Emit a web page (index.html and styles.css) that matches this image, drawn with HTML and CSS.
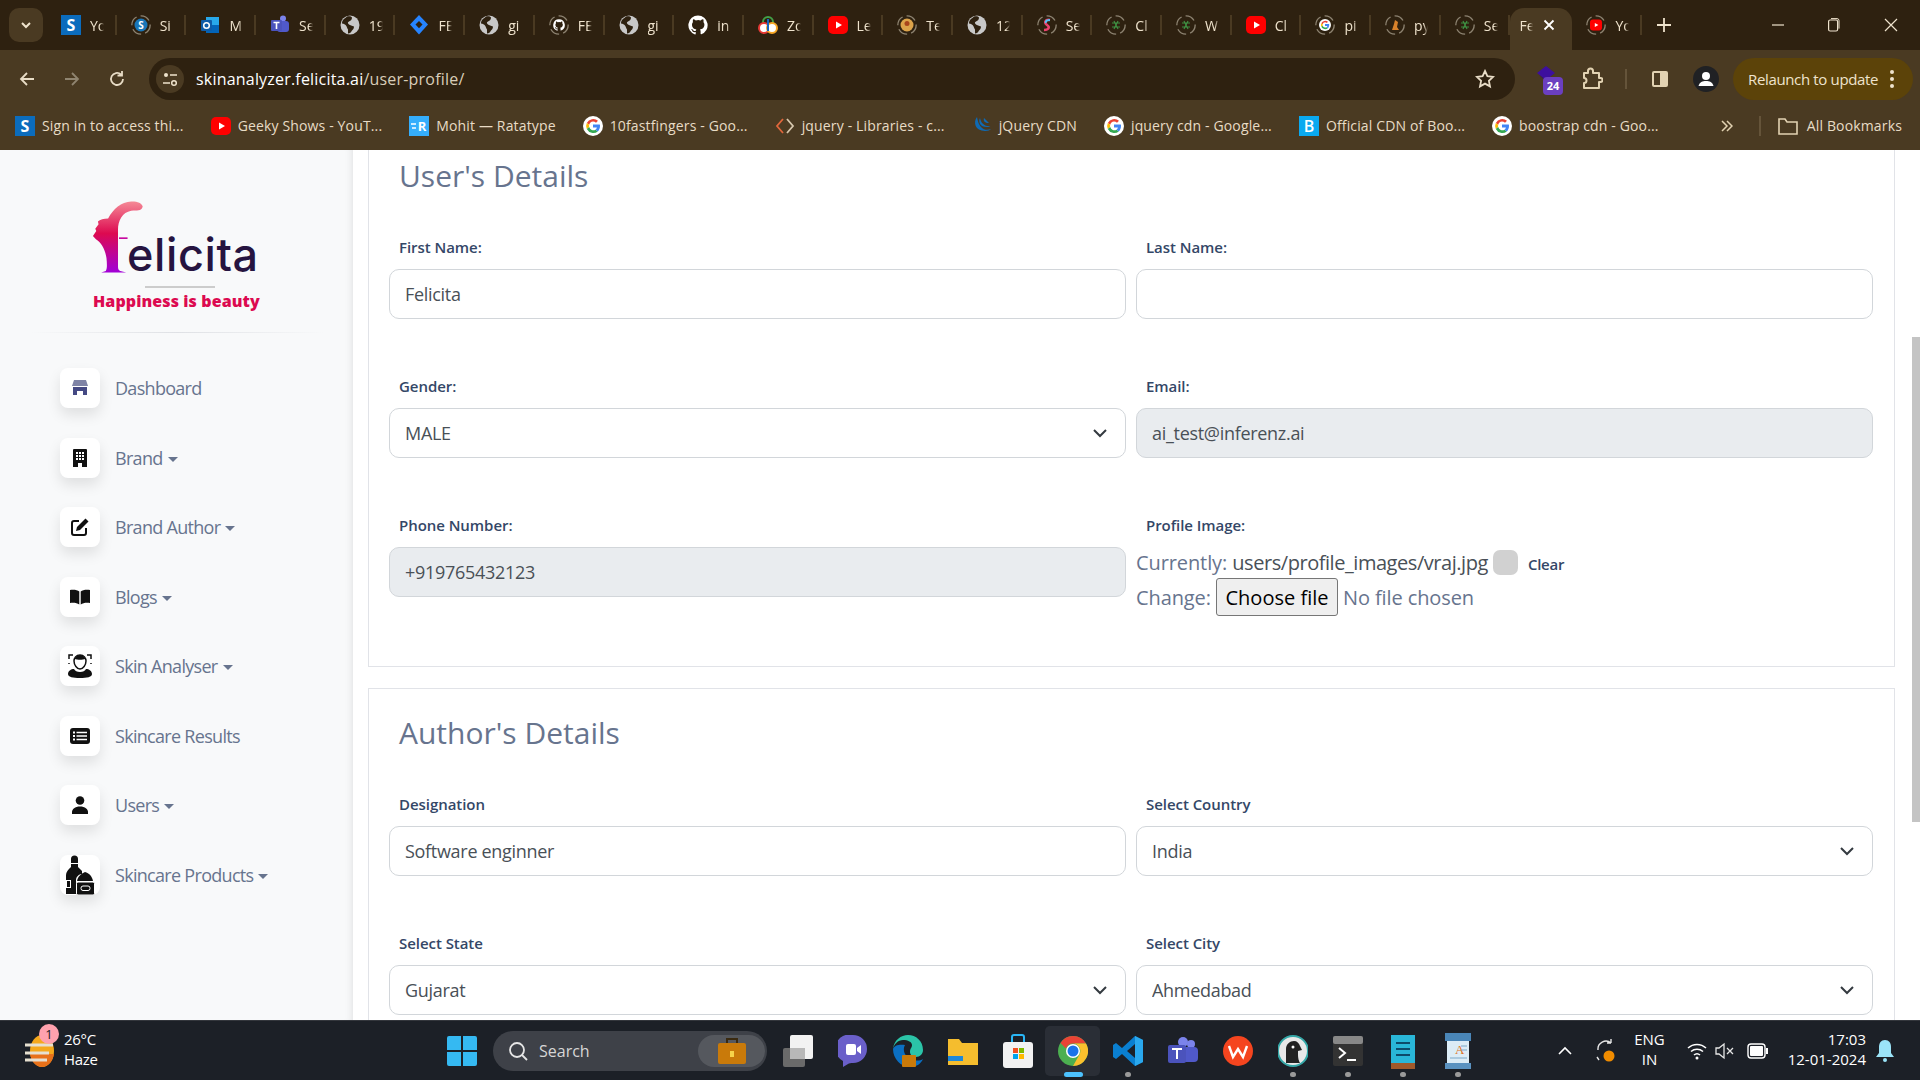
FILE: index.html
```html
<!DOCTYPE html>
<html lang="en">
<head>
    <meta charset="UTF-8">
    <title>User Profile</title>
    <link rel="stylesheet" href="styles.css">
</head>
<body>
    <svg class="defs" width="0" height="0">
        <symbol id="globe" viewBox="0 0 20 20"><circle cx="10" cy="10" r="9.5" fill="#c8c8c8"/><path d="M7 1.5c-2 2-5 3-5 7 2 0 3 1 4 2s1 3 2 4v4c2 0 3-1 4-3 1-1 2-2 2-4-2-1-4-1-5-2s-2-2 0-3 3-2 3-4C11 1 9 1 7 1.5z" fill="#2e2110"/></symbol>
        <symbol id="yt" viewBox="0 0 20 20"><rect y="1" width="20" height="18" rx="5" fill="#f00"/><path d="M8 6.5l6 3.5-6 3.5z" fill="#fff"/></symbol>
        <symbol id="goog" viewBox="0 0 20 20"><circle cx="10" cy="10" r="10" fill="#fff"/><path d="M10 5.5a4.5 4.5 0 0 1 3 1.2l2-2A7.300 7.300 0 0 0 3.800 7l2.400 1.800A4.300 4.300 0 0 1 10 5.500z" fill="#ea4335"/><path d="M3.800 7a7.300 7.300 0 0 0 0 6l2.400-1.900a4.300 4.300 0 0 1 0-2.300z" fill="#fbbc05"/><path d="M3.800 13a7.300 7.300 0 0 0 11 2.500l-2.300-1.800a4.400 4.400 0 0 1-6.300-2.600z" fill="#34a853"/><path d="M17 10c0-.6 0-1-.2-1.500H10v3h3.900c-.2 1-.7 1.700-1.400 2.200l2.300 1.800c1.300-1.300 2.200-3.200 2.200-5.500z" fill="#4285f4"/></symbol>
        <symbol id="gh" viewBox="0 0 20 20"><path d="M10 .5a9.700 9.700 0 0 0-3 18.900c.5.100.7-.2.700-.5v-1.800c-2.700.6-3.300-1.200-3.300-1.200-.4-1.100-1-1.400-1-1.400-.9-.6.100-.6.100-.6 1 .1 1.500 1 1.500 1 .9 1.500 2.300 1.100 2.800.8.100-.6.300-1.100.6-1.300-2.100-.2-4.400-1.100-4.400-4.800 0-1 .4-1.900 1-2.600-.1-.2-.4-1.200.1-2.600 0 0 .8-.3 2.700 1a9 9 0 0 1 4.800 0c1.800-1.300 2.700-1 2.700-1 .5 1.400.2 2.400.1 2.600.6.700 1 1.600 1 2.600 0 3.700-2.300 4.600-4.400 4.800.3.300.6.900.6 1.800v2.600c0 .3.200.6.700.5A9.700 9.700 0 0 0 10 .5z" fill="#fff"/></symbol>
        <symbol id="ring" viewBox="0 0 24 24"><circle cx="12" cy="12" r="11" fill="none" stroke="#8d8371" stroke-width="1.600" stroke-dasharray="12 5"/></symbol>
    </svg>

    <div class="tabstrip">
        <button class="tab-search"><svg width="12" height="12" viewBox="0 0 12 12"><path d="M2 4l4 4 4-4" fill="none" stroke="#efe3cd" stroke-width="2"/></svg></button>
        <div class="tab"><svg class="fav" viewBox="0 0 20 20"><rect width="20" height="20" fill="#0b6cbd"/><text x="10" y="16" font-size="16" font-weight="700" font-family="Open Sans" text-anchor="middle" fill="#fff">S</text></svg><span>Yo</span></div>
        <div class="tab"><svg class="fav"><use href="#ring"/><circle cx="10" cy="10" r="6.500" fill="#1976b8"/><text x="10" y="13.500" font-size="10" font-weight="700" font-family="Open Sans" text-anchor="middle" fill="#fff">S</text></svg><span>Si</span></div>
        <div class="tab"><svg class="fav" viewBox="0 0 20 20"><rect x="6" y="2" width="13" height="16" fill="#28a8ea"/><rect x="6" y="10" width="13" height="8" fill="#0364b8"/><rect x="1" y="5" width="11" height="11" rx="1" fill="#0f5ca8"/><circle cx="6.500" cy="10.500" r="2.800" fill="none" stroke="#fff" stroke-width="1.500"/></svg><span>M</span></div>
        <div class="tab"><svg class="fav" viewBox="0 0 20 20"><circle cx="13" cy="3.500" r="3" fill="#7b83eb"/><rect x="7" y="6" width="12" height="11" rx="3" fill="#5059c9"/><rect x="1" y="5" width="11" height="11" rx="1" fill="#4b53bc"/><path d="M3.500 7.500h6M6.500 7.500v6.500" stroke="#fff" stroke-width="1.600"/></svg><span>Se</span></div>
        <div class="tab"><svg class="fav"><use href="#globe"/></svg><span>19</span></div>
        <div class="tab"><svg class="fav" viewBox="0 0 20 20"><path d="M10 0l9 9.500-9 10-9-10z" fill="#2684ff"/><path d="M10 6l3.500 3.500-3.500 3.800-3.500-3.800z" fill="#2e2110"/></svg><span>FE</span></div>
        <div class="tab"><svg class="fav"><use href="#globe"/></svg><span>gi</span></div>
        <div class="tab"><svg class="fav"><use href="#ring"/><use href="#gh" x="4" y="4" width="12" height="12"/></svg><span>FE</span></div>
        <div class="tab"><svg class="fav"><use href="#globe"/></svg><span>gi</span></div>
        <div class="tab"><svg class="fav"><use href="#gh"/></svg><span>in</span></div>
        <div class="tab"><svg class="fav" viewBox="0 0 20 20"><circle cx="10" cy="7" r="5" fill="none" stroke="#43a047" stroke-width="2"/><circle cx="6" cy="13" r="5" fill="#fff" stroke="#e53935" stroke-width="2"/><circle cx="14" cy="13" r="5" fill="#fff" stroke="#f9a825" stroke-width="2"/><path d="M10 4v12" stroke="#1565c0" stroke-width="2"/></svg><span>Zo</span></div>
        <div class="tab"><svg class="fav"><use href="#yt"/></svg><span>Le</span></div>
        <div class="tab"><svg class="fav"><use href="#ring"/><circle cx="10" cy="10" r="6.500" fill="#dca34a"/><circle cx="10" cy="8.500" r="2.500" fill="#a8461c"/></svg><span>Te</span></div>
        <div class="tab"><svg class="fav"><use href="#globe"/></svg><span>12</span></div>
        <div class="tab"><svg class="fav"><use href="#ring"/><path d="M13 5c-5-1-6 3-3 5s2 5-3 5" fill="none" stroke="#e8416f" stroke-width="2.600"/><path d="M13 5c-3 0-5 1-4 3" fill="none" stroke="#4fc3f7" stroke-width="2"/></svg><span>Se</span></div>
        <div class="tab"><svg class="fav"><use href="#ring"/><path d="M6 8h8M6 12h8M8 6l4 8M12 6l-4 8" stroke="#3e8e41" stroke-width="1.200"/></svg><span>Cl</span></div>
        <div class="tab"><svg class="fav"><use href="#ring"/><path d="M6 8h8M6 12h8M8 6l4 8M12 6l-4 8" stroke="#3e8e41" stroke-width="1.200"/></svg><span>W</span></div>
        <div class="tab"><svg class="fav"><use href="#yt"/></svg><span>Cl</span></div>
        <div class="tab"><svg class="fav"><use href="#ring"/><use href="#goog" x="4" y="4" width="12" height="12"/></svg><span>pi</span></div>
        <div class="tab"><svg class="fav"><use href="#ring"/><path d="M7 15h7l-2-3 1-5-3-2-1 4z" fill="#d9822b"/></svg><span>py</span></div>
        <div class="tab"><svg class="fav"><use href="#ring"/><path d="M6 8h8M6 12h8M8 6l4 8M12 6l-4 8" stroke="#3e8e41" stroke-width="1.200"/></svg><span>Se</span></div>
        <div class="tab tab-active"><span>Fe</span><svg width="12" height="12" viewBox="0 0 12 12"><path d="M1.500 1.500l9 9M10.500 1.500l-9 9" stroke="#fff" stroke-width="1.800"/></svg></div>
        <div class="tab tab-last"><svg class="fav"><use href="#ring"/><use href="#yt" x="4" y="4" width="12" height="12"/></svg><span>Yo</span></div>
        <svg class="new-tab" width="14" height="14" viewBox="0 0 14 14"><path d="M7 0v14M0 7h14" stroke="#efe3cd" stroke-width="1.800"/></svg>
        <div class="win-btns">
            <svg width="12" height="12" viewBox="0 0 12 12"><path d="M0 6h12" stroke="#efe3cd" stroke-width="1.200"/></svg>
            <svg width="12" height="14" viewBox="0 0 12 14"><rect x=".6" y="2" width="9" height="11" rx="1.500" fill="none" stroke="#efe3cd" stroke-width="1.200"/><path d="M3 .6h6a2 2 0 0 1 2 2v8" fill="none" stroke="#efe3cd"/></svg>
            <svg width="14" height="14" viewBox="0 0 14 14"><path d="M1 1l12 12M13 1L1 13" stroke="#efe3cd" stroke-width="1.200"/></svg>
        </div>
    </div>

    <div class="toolbar">
        <svg class="nav-btn" width="18" height="18" viewBox="0 0 18 18"><path d="M16 9H3M9 3L3 9l6 6" fill="none" stroke="#e8dcc6" stroke-width="1.800"/></svg>
        <svg class="nav-btn" width="18" height="18" viewBox="0 0 18 18"><path d="M2 9h13M9 3l6 6-6 6" fill="none" stroke="#8f8470" stroke-width="1.800"/></svg>
        <svg class="nav-btn" width="18" height="18" viewBox="0 0 18 18"><path d="M15 9a6 6 0 1 1-2-4.500M14 1v4.500H9.500" fill="none" stroke="#e8dcc6" stroke-width="1.800"/></svg>
        <div class="omnibox">
            <span class="tune"><svg width="16" height="16" viewBox="0 0 16 16"><circle cx="4" cy="4" r="2" fill="#efe3cd"/><path d="M8 4h7M1 12h7" stroke="#efe3cd" stroke-width="1.500"/><circle cx="12" cy="12" r="2.300" fill="none" stroke="#efe3cd" stroke-width="1.500"/></svg></span>
            <span class="url">skinanalyzer.felicita.ai<span class="url-path">/user-profile/</span></span>
            <svg class="star" width="20" height="20" viewBox="0 0 20 20"><path d="M10 2l2.400 5.200 5.600.7-4.100 3.900 1.100 5.600-5-2.800-5 2.800 1.100-5.600L2 7.900l5.600-.7z" fill="none" stroke="#e8dcc6" stroke-width="1.800"/></svg>
        </div>
        <div class="ext-stack">
            <svg width="26" height="26" viewBox="0 0 26 26"><path d="M10 0l9 7-9 7-9-7z" fill="#3d0f9e"/><path d="M3 9l7 5 3-2v6z" fill="#2c0a78"/></svg>
            <span class="ext-badge">24</span>
        </div>
        <svg class="puzzle" width="22" height="24" viewBox="0 0 22 24"><path d="M3 6h4V4a2.500 2.500 0 0 1 5 0v2h6v5h1.500a2 2 0 0 1 0 4H18v6H3v-5a2.500 2.500 0 0 0 0-5z" fill="none" stroke="#e2d2b2" stroke-width="2" stroke-linejoin="round"/></svg>
        <span class="tool-sep"></span>
        <svg class="panel" width="18" height="18" viewBox="0 0 18 18"><rect x="1" y="1" width="16" height="16" rx="2" fill="#e2d2b2"/><rect x="3" y="3" width="6" height="12" fill="#4a3a22"/></svg>
        <span class="avatar"><svg width="26" height="26" viewBox="0 0 26 26"><circle cx="13" cy="13" r="13" fill="#202124"/><circle cx="13" cy="10" r="4" fill="#fff"/><path d="M5.500 20c1-4 4-5 7.500-5s6.500 1 7.500 5z" fill="#fff"/></svg></span>
        <div class="relaunch">Relaunch to update<span class="kebab"><i></i><i></i><i></i></span></div>
    </div>

    <div class="bookmarks">
        <div class="bm"><svg class="fav" viewBox="0 0 20 20"><rect width="20" height="20" fill="#0b6cbd"/><text x="10" y="16" font-size="16" font-weight="700" font-family="Open Sans" text-anchor="middle" fill="#fff">S</text></svg><span>Sign in to access thi...</span></div>
        <div class="bm"><svg class="fav"><use href="#yt"/></svg><span>Geeky Shows - YouT...</span></div>
        <div class="bm"><svg class="fav" viewBox="0 0 20 20"><rect width="20" height="20" fill="#35aefc"/><text x="13" y="15" font-size="13" font-weight="700" font-family="Open Sans" text-anchor="middle" fill="#fff">R</text><path d="M2 8h5M3 12h4" stroke="#fff" stroke-width="1.500"/></svg><span>Mohit — Ratatype</span></div>
        <div class="bm"><svg class="fav"><use href="#goog"/></svg><span>10fastfingers - Goo...</span></div>
        <div class="bm"><svg class="fav" viewBox="0 0 20 20"><path d="M8 3L2 10l6 7" fill="none" stroke="#e0673c" stroke-width="1.800"/><path d="M12 3l6 7-6 7" fill="none" stroke="#d6c7ae" stroke-width="1.800"/></svg><span>jquery - Libraries - c...</span></div>
        <div class="bm"><svg class="fav" viewBox="0 0 20 20"><path d="M5 1C1 6 3 15 13 15c3 0 5-1 6-2-5 2-12 1-14-12zM8 2c-2 4 0 9 7 9 2 0 3-.5 4-1-5 1-10-2-11-8zM12 2c-1 3 1 5 5 5" fill="#0f6ab4"/></svg><span>jQuery CDN</span></div>
        <div class="bm"><svg class="fav"><use href="#goog"/></svg><span>jquery cdn - Google...</span></div>
        <div class="bm"><svg class="fav" viewBox="0 0 20 20"><rect width="20" height="20" fill="#0aa9f0"/><text x="10" y="16" font-size="16" font-weight="600" font-family="Open Sans" text-anchor="middle" fill="#fff">B</text></svg><span>Official CDN of Boo...</span></div>
        <div class="bm"><svg class="fav"><use href="#goog"/></svg><span>boostrap cdn - Goo...</span></div>
        <div class="bm-right">
            <svg width="12" height="12" viewBox="0 0 12 12"><path d="M1 1l5 5-5 5M6 1l5 5-5 5" fill="none" stroke="#e2d2b2" stroke-width="1.500"/></svg>
            <span class="tool-sep"></span>
            <svg width="20" height="18" viewBox="0 0 20 18"><path d="M1 2h6l2 3h10v12H1z" fill="none" stroke="#e2d2b2" stroke-width="1.600"/></svg>
            <span>All Bookmarks</span>
        </div>
    </div>

    <div class="page">
        <aside class="sidebar">
            <div class="brand">
                <div class="logo">
                    <svg class="logo-mark" width="56" height="76" viewBox="270 150 170 228">
                        <defs><linearGradient id="logoGrad" x1="0" y1="0" x2="0" y2="1"><stop offset="0" stop-color="#f58a96"/><stop offset=".45" stop-color="#dd0a50"/><stop offset="1" stop-color="#a000d8"/></linearGradient></defs>
                        <path d="M430 168C428 158 412 152 395 153 365 155 340 175 325 205 312 205 300 208 294 214L296 222 286 236 289 243 279 258 288 268C304 278 316 298 320 325 322 345 322 358 318 364L304 369H380L362 364C356 362 355 358 355 350V240C355 210 368 186 395 181 412 178 426 184 430 168Z" fill="url(#logoGrad)"/>
                        <path d="M358 262h26v5h-26z" fill="#c70aa0"/>
                    </svg>
                    <span class="logo-text">elicita</span>
                </div>
                <span class="logo-rule"></span>
                <span class="tagline">Happiness is beauty</span>
            </div>
            <hr class="side-divider">
            <nav class="side-nav">
                <a class="side-link"><span class="side-icon"><svg width="16" height="16" viewBox="0 0 16 16"><path d="M2 0h12l2 6H0z" fill="#7f84a6"/><path d="M1 7h14v8h-4v-4H5v4H1z" fill="#454a84"/></svg></span>Dashboard</a>
                <a class="side-link"><span class="side-icon"><svg width="14" height="18" viewBox="0 0 14 18"><path d="M1 0h12a1 1 0 0 1 1 1v17H9v-4H5v4H0V1a1 1 0 0 1 1-1z" fill="#111"/><path d="M3 3h2v2H3zM6 3h2v2H6zM9 3h2v2H9zM3 6h2v2H3zM6 6h2v2H6zM9 6h2v2H9zM3 9h2v2H3zM6 9h2v2H6zM9 9h2v2H9z" fill="#fff"/></svg></span><span class="drop">Brand</span></a>
                <a class="side-link"><span class="side-icon"><svg width="18" height="18" viewBox="0 0 18 18"><path d="M8 3H3a2 2 0 0 0-2 2v10a2 2 0 0 0 2 2h10a2 2 0 0 0 2-2v-5" fill="none" stroke="#111" stroke-width="2"/><path d="M14.500.5l3 3L9 12l-4 1 1-4z" fill="#111"/></svg></span><span class="drop">Brand Author</span></a>
                <a class="side-link"><span class="side-icon"><svg width="20" height="16" viewBox="0 0 20 16"><path d="M9.300 2.500C7.500 1 4 .5 0 1v13c4-.5 7 0 9.300 1.500zM10.700 2.500C12.500 1 16 .5 20 1v13c-4-.5-7 0-9.300 1.500z" fill="#111"/></svg></span><span class="drop">Blogs</span></a>
                <a class="side-link"><span class="side-icon"><svg width="24" height="24" viewBox="0 0 24 24"><path d="M1 5V1h4M19 1h4v4M1 9v1M23 9v1" fill="none" stroke="#111" stroke-width="1.500"/><path d="M12 1c-4 0-6 3-6 6 0 4 3 8 6 8s6-4 6-8c0-3-2-6-6-6z" fill="none" stroke="#111" stroke-width="1.500"/><path d="M6.500 5c3 1 8 1 11 0-1-3-3-4-5.500-4S7.500 2 6.500 5z" fill="#111"/><path d="M0 20c0-3 3-5 6-5 1 2 3 3 6 3s5-1 6-3c3 0 6 2 6 5 0 3-5 4-12 4S0 23 0 20z" fill="#111"/></svg></span><span class="drop">Skin Analyser</span></a>
                <a class="side-link"><span class="side-icon"><svg width="20" height="16" viewBox="0 0 20 16"><rect width="20" height="16" rx="3" fill="#111"/><path d="M3 3.500h2v2H3zM3 7h2v2H3zM3 10.500h2v2H3zM6.500 3.800H17v1.400H6.500zM6.500 7.300H17v1.400H6.500zM6.500 10.800H17v1.400H6.500z" fill="#fff"/></svg></span>Skincare Results</a>
                <a class="side-link"><span class="side-icon"><svg width="16" height="18" viewBox="0 0 16 18"><circle cx="8" cy="4.500" r="4.300" fill="#111"/><path d="M0 18v-2c0-3 3-5.500 8-5.500s8 2.500 8 5.500v2z" fill="#111"/></svg></span><span class="drop">Users</span></a>
                <a class="side-link"><span class="side-icon side-icon-tall"><svg width="29" height="40" viewBox="0 0 29 40"><path d="M5 4a3.500 3.500 0 0 1 7 0v4H5z" fill="#111"/><path d="M5 9h7v3l4 4v3c-3 0-6 3-6 6v14H0V20c0-3 2-5 5-8z" fill="#111"/><path d="M0 25h5v8H0z" fill="#fff"/><path d="M1 26h3v6H1z" fill="#111"/><path d="M11 26c1-5 4-7 8-9 4 1 7 4 8 9z" fill="#111"/><rect x="10.500" y="27" width="18" height="13" rx="1.500" fill="#111" stroke="#fff"/><rect x="15" y="31" width="9" height="4.500" rx="2" fill="none" stroke="#fff"/></svg></span><span class="drop">Skincare Products</span></a>
            </nav>
        </aside>

        <main class="content">
            <section class="card card-first">
                <h2>User's Details</h2>
                <div class="form-grid">
                    <div class="field"><label>First Name:</label><input class="input-field" type="text" value="Felicita"></div>
                    <div class="field"><label>Last Name:</label><input class="input-field" type="text"></div>
                    <div class="field"><label>Gender:</label><select class="input-field select-field"><option>MALE</option></select></div>
                    <div class="field"><label>Email:</label><input class="input-field" type="text" value="ai_test@inferenz.ai" disabled></div>
                    <div class="field"><label>Phone Number:</label><input class="input-field" type="text" value="+919765432123" disabled></div>
                    <div class="field">
                        <label>Profile Image:</label>
                        <div class="file-line">Currently: <a class="file-link">users/profile_images/vraj.jpg</a><span class="fake-check"></span><label class="clear-label">Clear</label></div>
                        <div class="file-line file-change">Change: <button class="choose-btn">Choose file</button><span class="no-file">No file chosen</span></div>
                    </div>
                </div>
            </section>
            <section class="card">
                <h2>Author's Details</h2>
                <div class="form-grid">
                    <div class="field"><label>Designation</label><input class="input-field" type="text" value="Software enginner"></div>
                    <div class="field"><label>Select Country</label><select class="input-field select-field"><option>India</option></select></div>
                    <div class="field"><label>Select State</label><select class="input-field select-field"><option>Gujarat</option></select></div>
                    <div class="field"><label>Select City</label><select class="input-field select-field"><option>Ahmedabad</option></select></div>
                </div>
            </section>
        </main>
        <div class="scrollbar"><div class="scroll-thumb"></div></div>
    </div>

    <footer class="taskbar">
        <div class="weather">
            <svg class="weather-icon" width="30" height="36" viewBox="0 0 30 36"><ellipse cx="17" cy="18" rx="12" ry="16" fill="#f5a81c"/><path d="M17 34c6 0 11-6 12-13H5c1 7 6 13 12 13z" fill="#e8711a"/><path d="M0 12h28M0 20h24M0 27h22" stroke="#e6e0d0" stroke-width="3"/></svg>
            <span class="weather-badge">1</span>
            <div class="weather-text"><span>26°C</span><span>Haze</span></div>
        </div>
        <div class="task-center">
            <svg class="start" width="30" height="30" viewBox="0 0 30 30"><path d="M0 2a2 2 0 0 1 2-2h12v14H0zM16 0h12a2 2 0 0 1 2 2v12H16zM0 16h14v14H2a2 2 0 0 1-2-2zM16 16h14v12a2 2 0 0 1-2 2H16z" fill="#35b9f2"/></svg>
            <div class="search">
                <svg width="20" height="20" viewBox="0 0 20 20"><circle cx="9" cy="9" r="7" fill="none" stroke="#e6e6e6" stroke-width="1.800"/><path d="M14 14l5 5" stroke="#e6e6e6" stroke-width="1.800"/></svg>
                <span>Search</span>
                <span class="search-pic"><svg width="28" height="26" viewBox="0 0 28 26"><rect y="5" width="28" height="21" rx="2" fill="#c97a0a"/><path d="M9 5V1h10v4" fill="none" stroke="#3a2a10" stroke-width="2"/><rect x="12" y="13" width="4" height="6" fill="#f6d34a"/></svg></span>
            </div>
            <div class="task-icons">
                <span class="task-item"><svg width="30" height="32" viewBox="0 0 30 32"><rect y="13" width="22" height="19" rx="2" fill="#6a6a6a"/><rect x="7" width="23" height="24" rx="2" fill="#f2f2f2"/><rect x="7" y="13" width="15" height="11" fill="#b8b8b8"/></svg></span>
                <span class="task-item"><svg width="30" height="32" viewBox="0 0 30 32"><path d="M15 0a14 14 0 0 1 0 28c-2 0-4 0-5 1l-5 3v-6A14 14 0 0 1 15 0z" fill="#6a5fc9"/><rect x="8" y="9" width="10" height="11" rx="2" fill="#fff"/><path d="M19 13l4-3v9l-4-3z" fill="#fff"/></svg></span>
                <span class="task-item"><svg width="30" height="32" viewBox="0 0 30 32"><path d="M0 14C1 5 8 0 15 0c8 0 15 6 15 15 0 4-3 7-7 7-3 0-6-2-6-5 0-4 2-4 2-7 0-3-4-5-9-5C5 5 1 9 0 14z" fill="#2bc4a8"/><path d="M0 14c0 10 8 18 17 18 6 0 11-3 13-8-3 2-8 2-12 0C12 22 9 15 12 10 7 9 1 10 0 14z" fill="#0b6fc2"/><rect x="9" y="20" width="14" height="12" rx="1" fill="#c97a0a"/></svg></span>
                <span class="task-item"><svg width="30" height="28" viewBox="0 0 30 28"><path d="M0 2h11l3 4h16v22H0z" fill="#f5bd2e"/><rect y="19" width="15" height="5" fill="#1e88d8"/></svg></span>
                <span class="task-item"><svg width="30" height="34" viewBox="0 0 30 34"><path d="M9 8V3a2 2 0 0 1 2-2h8a2 2 0 0 1 2 2v5" fill="none" stroke="#29b6f6" stroke-width="2"/><rect y="8" width="30" height="26" rx="3" fill="#f2f2f2"/><path d="M10 14h5v5h-5z" fill="#f25022"/><path d="M16 14h5v5h-5z" fill="#7fba00"/><path d="M10 20h5v5h-5z" fill="#00a4ef"/><path d="M16 20h5v5h-5z" fill="#ffb900"/></svg></span>
                <span class="task-item task-active"><svg width="30" height="30" viewBox="0 0 30 30"><circle cx="15" cy="15" r="15" fill="#4caf50"/><path d="M15 0a15 15 0 0 1 13 7.500H15a7.500 7.500 0 0 0-7 5L2.500 7A15 15 0 0 1 15 0z" fill="#ea4335"/><path d="M28 7.500A15 15 0 0 1 15 30l6.500-11.500A7.500 7.500 0 0 0 15 7.500z" fill="#fbc02d"/><circle cx="15" cy="15" r="7" fill="#fff"/><circle cx="15" cy="15" r="5.500" fill="#1a73e8"/></svg></span>
                <span class="task-item task-open"><svg width="30" height="30" viewBox="0 0 30 30"><path d="M22 0l8 4v22l-8 4L9 18l-6 5-3-2V9l3-2 6 5z" fill="#0a7fd0"/><path d="M22 8l-8 7 8 7z" fill="#1c2027"/><path d="M22 0l8 4v22l-8 4z" fill="#2aa8ee"/></svg></span>
                <span class="task-item"><svg width="30" height="30" viewBox="0 0 30 30"><circle cx="23" cy="8" r="4" fill="#7b83eb"/><circle cx="15" cy="6" r="5" fill="#7b83eb"/><rect x="11" y="11" width="19" height="15" rx="4" fill="#5059c9"/><rect y="9" width="18" height="18" rx="2" fill="#4b53bc"/><path d="M4 13h10M9 13v10" stroke="#fff" stroke-width="2"/></svg></span>
                <span class="task-item"><svg width="30" height="30" viewBox="0 0 30 30"><circle cx="15" cy="15" r="15" fill="#f5451f"/><path d="M6 10l4 11 5-8 5 8 4-11" fill="none" stroke="#fff" stroke-width="2.400"/></svg></span>
                <span class="task-item task-open"><svg width="30" height="32" viewBox="0 0 30 32"><circle cx="15" cy="16" r="15" fill="#e8e8e8" stroke="#35a8a8" stroke-width="2"/><path d="M8 28V14c0-5 4-8 8-8 3 0 5 2 6 5l2 4-4 1v3c0 5 1 7 2 9z" fill="#222"/><circle cx="15" cy="12" r="1.500" fill="#fff"/></svg></span>
                <span class="task-item task-open"><svg width="30" height="30" viewBox="0 0 30 30"><rect width="30" height="30" rx="2" fill="#333"/><rect width="30" height="8" rx="2" fill="#888"/><path d="M6 12l6 5-6 5" fill="none" stroke="#fff" stroke-width="2"/><path d="M14 24h9" stroke="#fff" stroke-width="2"/></svg></span>
                <span class="task-item task-open"><svg width="24" height="36" viewBox="0 0 24 36"><rect y="2" width="24" height="30" fill="#29b6d8"/><rect y="30" width="24" height="6" fill="#a0592a"/><path d="M5 10h14M5 16h14M5 22h14" stroke="#0d4a6a" stroke-width="2"/></svg></span>
                <span class="task-item task-open"><svg width="26" height="36" viewBox="0 0 26 36"><rect width="26" height="8" fill="#4a86b8"/><rect x="2" y="8" width="22" height="24" fill="#dcecf6"/><text x="10" y="21" font-size="13" font-family="Liberation Serif" fill="#e07020">A</text><path d="M16 13h6M16 17h6M5 25h17" stroke="#7aa8c8"/><rect y="30" width="26" height="6" fill="#5a92c0"/></svg></span>
            </div>
        </div>
        <div class="tray">
            <svg class="tray-caret" width="14" height="10" viewBox="0 0 14 10"><path d="M1 8l6-6 6 6" fill="none" stroke="#fff" stroke-width="1.600"/></svg>
            <svg class="tray-sync" width="22" height="24" viewBox="0 0 22 24"><path d="M4 11a8 8 0 0 1 13-7M3 18l2 3M17 4V0M17 4h-4" fill="none" stroke="#e6e6e6" stroke-width="1.400"/><circle cx="15" cy="17" r="5.500" fill="#f08c00"/></svg>
            <div class="tray-lang"><span>ENG</span><span>IN</span></div>
            <svg class="tray-wifi" width="20" height="18" viewBox="0 0 20 18"><path d="M1 6a13 13 0 0 1 18 0M4 9.500a9 9 0 0 1 12 0M7 13a4.500 4.500 0 0 1 6 0" fill="none" stroke="#fff" stroke-width="1.500"/><circle cx="10" cy="16" r="1.500" fill="#fff"/></svg>
            <svg class="tray-vol" width="20" height="18" viewBox="0 0 20 18"><path d="M1 6h3l5-4v14l-5-4H1z" fill="none" stroke="#e6e6e6" stroke-width="1.300"/><path d="M12 6l6 6M18 6l-6 6" stroke="#e6e6e6" stroke-width="1.300"/></svg>
            <svg class="tray-batt" width="22" height="16" viewBox="0 0 22 16"><rect x="1" y="1" width="17" height="14" rx="3" fill="none" stroke="#fff" stroke-width="1.400"/><rect x="3" y="3" width="13" height="10" rx="1" fill="#fff"/><rect x="19" y="5" width="2" height="6" fill="#fff"/></svg>
            <div class="tray-clock"><span>17:03</span><span>12-01-2024</span></div>
            <svg class="tray-bell" width="18" height="22" viewBox="0 0 18 22"><path d="M9 0c4 0 6 3 6 7v6l3 4H0l3-4V7c0-4 2-7 6-7z" fill="#9be4f8"/><circle cx="9" cy="20" r="2" fill="#9be4f8"/></svg>
        </div>
    </footer>
</body>
</html>
```

FILE: styles.css
```css
* {
    box-sizing: border-box;
}
html, body {
    height: 100%;
}
body {
    margin: 0;
    height: 1080px;
    overflow: hidden;
    display: flex;
    flex-direction: column;
    font-family: "Open Sans", sans-serif;
    background-color: #fff;
}
.defs {
    position: absolute;
}
.fav {
    width: 20px;
    height: 20px;
    flex-shrink: 0;
}

/* browser chrome */
.tabstrip {
    height: 50px;
    flex-shrink: 0;
    display: flex;
    align-items: center;
    background-color: #2e2110;
    color: #efe3cd;
    font-size: 14px;
}
.tab-search {
    width: 34px;
    height: 34px;
    margin: 0 4px 0 9px;
    padding: 0;
    border: none;
    border-radius: 10px;
    background-color: #4a3a22;
    display: flex;
    align-items: center;
    justify-content: center;
}
.tab {
    position: relative;
    width: 69.7px;
    height: 100%;
    padding-left: 14px;
    display: flex;
    align-items: center;
    gap: 9px;
    flex-shrink: 0;
}
.tab span {
    width: 14px;
    overflow: hidden;
    white-space: nowrap;
    mask-image: linear-gradient(90deg, #000 70%, transparent);
}
.tab::after {
    content: "";
    position: absolute;
    right: 0;
    top: 15px;
    width: 2px;
    height: 20px;
    background-color: #4a3a22;
}
.tab-active {
    width: 62px;
    height: 42px;
    margin-top: 8px;
    padding: 0 0 8px 9px;
    gap: 10px;
    background-color: #4a3a22;
    border-radius: 14px 14px 0 0;
}
.tab-active::after, .tab-last::after {
    display: none;
}
.tab-last::before {
    content: "";
    position: absolute;
    right: 0;
    top: 15px;
    width: 2px;
    height: 20px;
    background-color: #4a3a22;
}
.new-tab {
    margin-left: 15px;
}
.win-btns {
    margin-left: auto;
    margin-right: 22px;
    display: flex;
    align-items: center;
    gap: 44px;
}
.toolbar {
    height: 57px;
    flex-shrink: 0;
    display: flex;
    align-items: flex-start;
    padding-top: 8px;
    background-color: #4a3a22;
    color: #efe3cd;
}
.nav-btn {
    margin: 12px 0 0 18px;
    flex-shrink: 0;
}
.nav-btn + .nav-btn {
    margin-left: 27px;
}
.omnibox {
    width: 1366px;
    height: 42px;
    margin-left: 23px;
    padding: 0 20px 0 7px;
    display: flex;
    align-items: center;
    border-radius: 21px;
    background-color: #2e2110;
}
.tune {
    width: 28px;
    height: 28px;
    border-radius: 50%;
    background-color: #4a3a22;
    display: flex;
    align-items: center;
    justify-content: center;
}
.url {
    margin-left: 12px;
    font-size: 16px;
    letter-spacing: 0.2px;
    color: #fff;
}
.url-path {
    color: #d9cdb8;
}
.star {
    margin-left: auto;
}
.ext-stack {
    position: relative;
    width: 26px;
    height: 28px;
    margin: 8px 0 0 21px;
}
.ext-badge {
    position: absolute;
    left: 7px;
    top: 11px;
    width: 20px;
    height: 18px;
    border-radius: 4px;
    background-color: #6b3fc0;
    color: #fff;
    font-size: 11px;
    font-weight: 700;
    line-height: 18px;
    text-align: center;
}
.puzzle {
    margin: 9px 0 0 19px;
}
.tool-sep {
    width: 2px;
    height: 20px;
    background-color: #65543a;
    flex-shrink: 0;
}
.toolbar .tool-sep {
    margin: 11px 0 0 22px;
}
.panel {
    margin: 12px 0 0 24px;
}
.avatar {
    margin: 8px 0 0 24px;
    height: 26px;
}
.relaunch {
    width: 180px;
    height: 42px;
    margin-left: 14px;
    padding: 0 19px 0 15px;
    display: flex;
    align-items: center;
    justify-content: space-between;
    border-radius: 21px;
    background-color: #5c4309;
    font-size: 15px;
    letter-spacing: -0.35px;
    white-space: nowrap;
}
.kebab {
    display: flex;
    flex-direction: column;
    gap: 3px;
}
.kebab i {
    width: 4px;
    height: 4px;
    border-radius: 50%;
    background-color: #efe3cd;
}
.bookmarks {
    height: 43px;
    flex-shrink: 0;
    display: flex;
    align-items: center;
    gap: 27px;
    padding: 0 0 6px 15px;
    background-color: #4a3a22;
    color: #e8dcc6;
    font-size: 14px;
    letter-spacing: 0.15px;
    white-space: nowrap;
}
.bm {
    display: flex;
    align-items: center;
    gap: 7px;
}
.bm-right {
    margin-left: auto;
    margin-right: 18px;
    display: flex;
    align-items: center;
}
.bm-right svg:first-child {
    margin-right: 26px;
}
.bm-right svg:nth-child(3) {
    margin: 0 9px 0 17px;
}

/* page */
.page {
    flex: 1;
    min-height: 0;
    display: flex;
    overflow: hidden;
    background-color: #fff;
}
.sidebar {
    width: 353px;
    flex-shrink: 0;
    padding-top: 50px;
    background-color: #f8f9fa;
    box-shadow: inset -8px 0 8px -8px rgba(0, 0, 0, 0.12);
}
.brand {
    height: 115px;
    padding-left: 93px;
    display: flex;
    flex-direction: column;
}
.logo {
    display: flex;
    align-items: flex-end;
    height: 76px;
}
.logo-mark {
    margin-left: -3px;
    flex-shrink: 0;
}
.logo-text {
    margin: 0 0 -2px -19px;
    font-family: Inter, sans-serif;
    font-size: 45px;
    font-weight: 500;
    line-height: 46px;
    letter-spacing: 0.6px;
    color: #261440;
}
.logo-rule {
    width: 70px;
    height: 2px;
    margin: 10px 0 0 52px;
    background-color: #ccc;
}
.tagline {
    margin-top: 2px;
    font-size: 16px;
    font-weight: 800;
    line-height: 22px;
    letter-spacing: 0.1px;
    color: #dc0a50;
    white-space: nowrap;
}
.side-divider {
    width: 295px;
    height: 1px;
    margin: 17px 0 0 30px;
    border: none;
    background-image: linear-gradient(90deg, transparent, #dfe1e5, transparent);
}
.side-nav {
    margin-top: 35px;
    padding-left: 60px;
    display: flex;
    flex-direction: column;
    gap: 29.5px;
}
.side-link {
    height: 40px;
    display: flex;
    align-items: center;
    gap: 15px;
    font-size: 18px;
    letter-spacing: -0.7px;
    color: #67748e;
}
.side-icon {
    width: 40px;
    height: 40px;
    border-radius: 8px;
    background-color: #fff;
    box-shadow: 0 7px 14px rgba(0, 0, 0, 0.1);
    display: flex;
    align-items: center;
    justify-content: center;
    flex-shrink: 0;
    overflow: hidden;
}
.side-icon-tall {
    align-items: flex-end;
    justify-content: flex-start;
    padding-left: 6px;
}
.drop::after {
    content: "";
    display: inline-block;
    margin-left: 5px;
    vertical-align: 3px;
    border-top: 5px solid #67748e;
    border-left: 5px solid transparent;
    border-right: 5px solid transparent;
}

/* form cards */
.content {
    flex: 1;
    min-width: 0;
    padding: 0 15px;
}
.card {
    padding: 24px 21px 40px 20px;
    border: 1px solid #e1e3e8;
    margin-bottom: 21px;
}
.card-first {
    margin-top: -19px;
    padding-bottom: 50px;
}
.card h2 {
    margin: 0 0 40px 10px;
    font-size: 30px;
    font-weight: 400;
    line-height: 40px;
    color: #67748e;
}
.form-grid {
    display: grid;
    grid-template-columns: 1fr 1fr;
    column-gap: 10px;
    row-gap: 56px;
}
.field > label {
    display: block;
    margin: 0 0 11px 10px;
    font-size: 15px;
    font-weight: 600;
    line-height: 22px;
    letter-spacing: -0.05px;
    color: #344767;
}
.input-field {
    display: block;
    width: 100%;
    height: 50px;
    padding: 0 15px;
    border: 1px solid #d2d6da;
    border-radius: 10px;
    background-color: #fff;
    font-family: "Open Sans", sans-serif;
    font-size: 18px;
    letter-spacing: -0.3px;
    color: #495057;
}
.input-field:disabled {
    background-color: #e9ecef;
    opacity: 1;
}
.select-field {
    appearance: none;
    background-image: url("data:image/svg+xml,%3Csvg xmlns='http://www.w3.org/2000/svg' viewBox='0 0 16 16'%3E%3Cpath fill='none' stroke='%23343a40' stroke-width='2' d='M2 5l6 6 6-6'/%3E%3C/svg%3E");
    background-repeat: no-repeat;
    background-position: right 17px center;
    background-size: 16px 16px;
}
.file-line {
    display: flex;
    align-items: center;
    height: 31px;
    font-size: 20px;
    letter-spacing: -0.1px;
    color: #67748e;
    white-space: pre;
}
.file-change {
    height: 38px;
}
.file-link {
    letter-spacing: -0.45px;
    color: #495057;
}
.fake-check {
    width: 25px;
    height: 25px;
    margin-left: 5px;
    border-radius: 7px;
    background-color: #d1d1d1;
}
.clear-label {
    margin-left: 10px;
    padding-top: 3px;
    font-size: 15px;
    font-weight: 600;
    letter-spacing: -0.25px;
    color: #344767;
}
.choose-btn {
    width: 122px;
    height: 38px;
    padding: 0;
    border: 1px solid #767676;
    border-radius: 3px;
    background-color: #efefef;
    color: #000;
    font-family: inherit;
    font-size: 20px;
}
.no-file {
    margin-left: 5px;
}
.scrollbar {
    width: 10px;
    flex-shrink: 0;
    background-color: #fff;
}
.scroll-thumb {
    width: 8px;
    height: 485px;
    margin: 187px 0 0 2px;
    background-color: #c4c4c4;
}

/* taskbar */
.taskbar {
    height: 60px;
    flex-shrink: 0;
    display: flex;
    align-items: center;
    background-color: #1c2027;
    border-top: 1px solid #33363c;
    color: #fff;
    font-size: 15px;
}
.weather {
    position: relative;
    width: 447px;
    padding-left: 25px;
    display: flex;
    align-items: center;
    flex-shrink: 0;
}
.weather-badge {
    position: absolute;
    left: 39px;
    top: -5px;
    width: 20px;
    height: 20px;
    border-radius: 50%;
    background-color: #ffa1ae;
    color: #1c2027;
    font-size: 13px;
    line-height: 20px;
    text-align: center;
}
.weather-text {
    margin: 0 0 3px 9px;
    display: flex;
    flex-direction: column;
    line-height: 20px;
    letter-spacing: -0.3px;
}
.task-center {
    display: flex;
    align-items: center;
}
.start {
    flex-shrink: 0;
}
.search {
    width: 274px;
    height: 40px;
    margin-left: 16px;
    padding: 0 2px 0 15px;
    display: flex;
    align-items: center;
    border-radius: 20px;
    background-color: #3e4148;
    font-size: 16px;
    color: #d6d6d6;
}
.search > span:nth-child(2) {
    margin-left: 11px;
}
.search-pic {
    width: 67px;
    height: 32px;
    margin-left: auto;
    border-radius: 16px;
    background-color: #55585e;
    display: flex;
    align-items: center;
    justify-content: center;
}
.task-icons {
    margin-left: 3px;
    display: flex;
    align-items: center;
}
.task-item {
    position: relative;
    width: 55px;
    height: 50px;
    display: flex;
    align-items: center;
    justify-content: center;
}
.task-active {
    border-radius: 5px;
    background-color: #2a2e36;
}
.task-active::after, .task-open::after {
    content: "";
    position: absolute;
    bottom: -1px;
    left: 50%;
    width: 6px;
    height: 5px;
    margin-left: -3px;
    border-radius: 3px;
    background-color: #9a9a9a;
}
.task-active::after {
    width: 19px;
    margin-left: -9px;
    background-color: #4cc2ff;
}
.tray {
    flex: 1;
    padding-right: 26px;
    display: flex;
    align-items: center;
    justify-content: flex-end;
}
.tray-lang {
    margin: 0 22px 3px 18px;
    display: flex;
    flex-direction: column;
    align-items: center;
    line-height: 20px;
}
.tray-caret {
    margin-right: 22px;
}
.tray-vol {
    margin: 0 6px 0 8px;
}
.tray-batt {
    margin: 0 19px 0 6px;
}
.tray-clock {
    margin-bottom: 3px;
    display: flex;
    flex-direction: column;
    align-items: flex-end;
    line-height: 20px;
}
.tray-bell {
    margin-left: 10px;
}
```
